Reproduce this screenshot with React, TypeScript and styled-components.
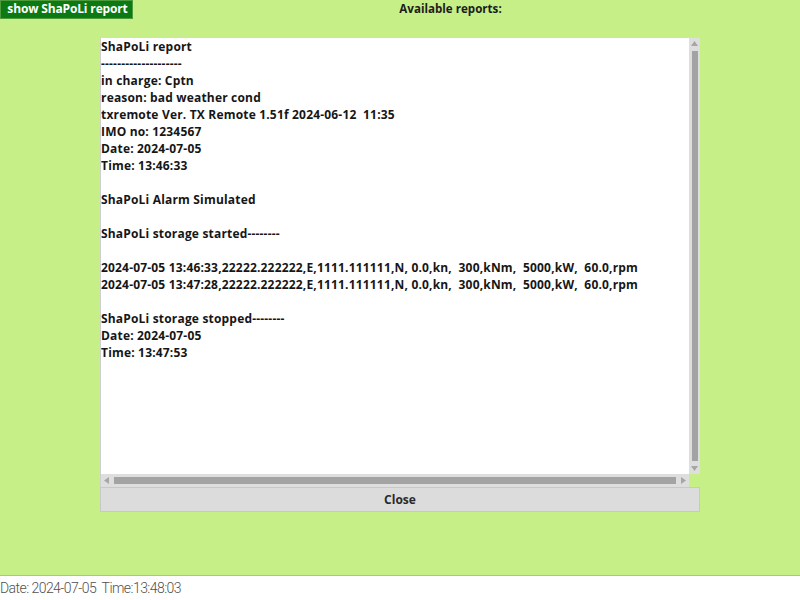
import { FC } from 'react'
import styled, { createGlobalStyle } from 'styled-components'

const GlobalStyle = createGlobalStyle`
  html, body {
    margin: 0;
    padding: 0;
    background: #ffffff;
  }
  body {
    font-family: "Open Sans", "Liberation Sans", sans-serif;
  }
`

const Page = styled.div`
  width: 800px;
  height: 600px;
  display: flex;
  flex-direction: column;
`

const Main = styled.div`
  height: 575px;
  background: #c6f087;
  border-bottom: 1px solid #a9c97a;
  display: flex;
  flex-direction: column;
`

const Header = styled.div`
  display: flex;
  align-items: flex-start;
  height: 19px;
`

const ShowButton = styled.button`
  height: 19px;
  width: 133px;
  padding: 0 0 1px 2px;
  margin: 0;
  border: 1px solid #4f9a3c;
  background: #0b7a12;
  color: #ffffff;
  font-family: "Open Sans", sans-serif;
  font-weight: 700;
  font-size: 12px;
  line-height: 16px;
  letter-spacing: -0.15px;
  text-align: center;
  cursor: pointer;
`

const Title = styled.div`
  flex: 1;
  padding-right: 32px;
  text-align: center;
  font-family: "Open Sans", sans-serif;
  font-weight: 700;
  font-size: 11.6px;
  line-height: 18px;
  color: #1c1c1c;
`

const Dialog = styled.div`
  margin: 19px 0 0 100px;
  width: 600px;
  display: flex;
  flex-direction: column;
`

const ReportBox = styled.div`
  height: 449px;
  display: grid;
  grid-template-columns: 1fr 11px;
  grid-template-rows: 1fr 13px;
  border-left: 1px solid #cfcfcf;
`

const ReportText = styled.pre`
  margin: 0;
  padding: 0;
  background: #ffffff;
  overflow: hidden;
  font-family: "Open Sans", sans-serif;
  font-weight: 700;
  font-size: 12px;
  line-height: 17px;
  letter-spacing: 0.18px;
  color: #161616;
  white-space: pre;
`

const VScroll = styled.div`
  background: #dedede;
  display: flex;
  flex-direction: column;
  align-items: center;
  padding: 3px 0;
`

const HScroll = styled.div`
  background: #dedede;
  display: flex;
  align-items: center;
  padding: 0 3px;
`

const Thumb = styled.div<{ $vertical?: boolean }>`
  flex: 1;
  background: #a3a3a3;
  ${({ $vertical }) =>
    $vertical ? 'width: 6px; margin: 5px 0;' : 'height: 7px; margin: 0 5px;'}
`

const Arrow = styled.svg`
  flex: none;
  fill: #a6a6a6;
`

const Corner = styled.div`
  background: transparent;
`

const CloseButton = styled.button`
  height: 25px;
  margin: 0;
  padding: 0;
  border: 1px solid #c8c8c8;
  background: #dcdcdc;
  font-family: "Open Sans", sans-serif;
  font-weight: 700;
  font-size: 12px;
  color: #2a2a2a;
  cursor: pointer;
`

const Footer = styled.div`
  padding: 2px 0 0 0;
  font-family: Roboto, sans-serif;
  font-weight: 300;
  font-size: 14px;
  line-height: 20px;
  letter-spacing: -0.55px;
  color: #505050;
  white-space: pre;
`

const report = `ShaPoLi report
--------------------
in charge: Cptn
reason: bad weather cond
txremote Ver. TX Remote 1.51f 2024-06-12  11:35
IMO no: 1234567
Date: 2024-07-05
Time: 13:46:33

ShaPoLi Alarm Simulated

ShaPoLi storage started--------

2024-07-05 13:46:33,22222.222222,E,1111.111111,N, 0.0,kn,  300,kNm,  5000,kW,  60.0,rpm
2024-07-05 13:47:28,22222.222222,E,1111.111111,N, 0.0,kn,  300,kNm,  5000,kW,  60.0,rpm

ShaPoLi storage stopped--------
Date: 2024-07-05
Time: 13:47:53`

const App: FC = () => (
  <Page>
    <GlobalStyle />
    <Main>
      <Header>
        <ShowButton>show ShaPoLi report</ShowButton>
        <Title>Available reports:</Title>
      </Header>
      <Dialog>
        <ReportBox>
          <ReportText>{report}</ReportText>
          <VScroll>
            <Arrow width="7" height="5" viewBox="0 0 7 5">
              <path d="M3.5 0L7 5H0z" />
            </Arrow>
            <Thumb $vertical />
            <Arrow width="7" height="5" viewBox="0 0 7 5">
              <path d="M0 0H7L3.5 5z" />
            </Arrow>
          </VScroll>
          <HScroll>
            <Arrow width="5" height="7" viewBox="0 0 5 7">
              <path d="M0 3.5L5 0V7z" />
            </Arrow>
            <Thumb />
            <Arrow width="5" height="7" viewBox="0 0 5 7">
              <path d="M0 0L5 3.5L0 7z" />
            </Arrow>
          </HScroll>
          <Corner />
        </ReportBox>
        <CloseButton>Close</CloseButton>
      </Dialog>
    </Main>
    <Footer>Date: 2024-07-05  Time:13:48:03</Footer>
  </Page>
)

export default App
